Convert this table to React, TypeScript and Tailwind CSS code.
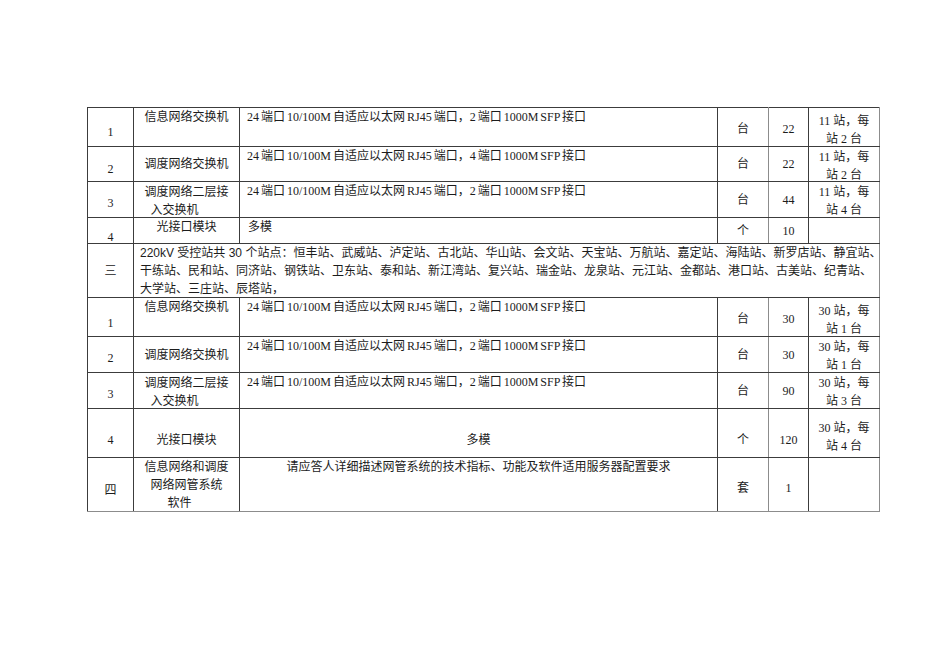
import React from "react";

const font = "font-['Liberation_Serif','Noto_Sans_CJK_SC',serif]";
const line = "border border-[#3c3c3c]";
const soft = "border-r-[#8c8c8c]";
const spec = "24 端口 10/100M 自适应以太网 RJ45 端口，2 端口 1000M SFP 接口";

// 两行备注，固定高度以免撑高行
function Note({ a, b }: { a: string; b: string }) {
  return (
    <div className="h-[33px]">
      {a}
      <br />
      {b}
    </div>
  );
}

export default function App() {
  return (
    <div className={`min-h-[672px] w-[950px] bg-white pl-[87px] pt-[107px] text-[12px] leading-[18px] text-[#1c1c1c] ${font}`}>
      <table className="w-[793px] table-fixed border-collapse">
        <colgroup>
          <col className="w-[46px]" />
          <col className="w-[106px]" />
          <col className="w-[478px]" />
          <col className="w-[51px]" />
          <col className="w-[40px]" />
          <col className="w-[71px]" />
        </colgroup>
        <tbody>
          {/* 第一组 */}
          <tr className="h-[39px]">
            <td className={`${line} p-0 pb-[7px] text-center align-bottom leading-[14px]`}>1</td>
            <td className={`${line} p-0 text-center align-top`}>信息网络交换机</td>
            <td className={`${line} p-0 pl-[7px] align-top whitespace-nowrap [word-spacing:-1px]`}>{spec}</td>
            <td className={`${line} ${soft} p-0 pt-[3px] text-center align-middle`}>台</td>
            <td className={`${line} p-0 pt-[3px] text-center align-middle`}>22</td>
            <td className={`${line} ${soft} p-0 pt-[3px] text-center align-middle`}><Note a="11 站，每" b="站 2 台" /></td>
          </tr>
          <tr className="h-[35px]">
            <td className={`${line} p-0 pb-[5px] text-center align-bottom leading-[14px]`}>2</td>
            <td className={`${line} p-0 text-center align-middle`}>调度网络交换机</td>
            <td className={`${line} p-0 pl-[7px] align-top whitespace-nowrap [word-spacing:-1px]`}>24 端口 10/100M 自适应以太网 RJ45 端口，4 端口 1000M SFP 接口</td>
            <td className={`${line} ${soft} p-0 text-center align-middle`}>台</td>
            <td className={`${line} p-0 text-center align-middle`}>22</td>
            <td className={`${line} ${soft} p-0 text-center align-middle`}><Note a="11 站，每" b="站 2 台" /></td>
          </tr>
          <tr className="h-[36px]">
            <td className={`${line} p-0 pb-[7px] text-center align-bottom leading-[14px]`}>3</td>
            <td className={`${line} p-0 text-center align-middle`}>
              <div className="h-[34px]">调度网络二层接<br /><span className="pr-[24px]">入交换机</span></div>
            </td>
            <td className={`${line} p-0 pl-[7px] align-top whitespace-nowrap [word-spacing:-1px]`}>{spec}</td>
            <td className={`${line} ${soft} p-0 text-center align-middle`}>台</td>
            <td className={`${line} p-0 text-center align-middle`}>44</td>
            <td className={`${line} ${soft} p-0 text-center align-middle`}><Note a="11 站，每" b="站 4 台" /></td>
          </tr>
          <tr className="h-[26px]">
            <td className={`${line} p-0 text-center align-bottom leading-[12px]`}>4</td>
            <td className={`${line} p-0 text-center align-top`}>光接口模块</td>
            <td className={`${line} p-0 pl-[8px] align-top`}>多模</td>
            <td className={`${line} ${soft} p-0 text-center align-middle`}>个</td>
            <td className={`${line} p-0 text-center align-middle`}>10</td>
            <td className={`${line} ${soft} p-0`}></td>
          </tr>

          {/* 三 */}
          <tr className="h-[54px]">
            <td className={`${line} p-0 text-center align-middle text-[#4a4a4a]`}>三</td>
            <td colSpan={5} className={`${line} ${soft} p-0 pl-[6px] align-top whitespace-nowrap font-['Liberation_Sans','Noto_Sans_CJK_SC',sans-serif]`}>
              <div className="h-[52px]">
                <div>220kV 受控站共 30 个站点：恒丰站、武威站、泸定站、古北站、华山站、会文站、天宝站、万航站、嘉定站、海陆站、新罗店站、静宜站、</div>
                <div>干练站、民和站、同济站、钢铁站、卫东站、泰和站、新江湾站、复兴站、瑞金站、龙泉站、元江站、金都站、港口站、古美站、纪青站、</div>
                <div>大学站、三庄站、辰塔站，</div>
              </div>
            </td>
          </tr>

          {/* 第二组 */}
          <tr className="h-[39px]">
            <td className={`${line} p-0 pb-[6px] text-center align-bottom leading-[14px]`}>1</td>
            <td className={`${line} p-0 text-center align-top`}>信息网络交换机</td>
            <td className={`${line} p-0 pl-[7px] align-top whitespace-nowrap [word-spacing:-1px]`}>{spec}</td>
            <td className={`${line} ${soft} p-0 pt-[4px] text-center align-middle`}>台</td>
            <td className={`${line} p-0 pt-[4px] text-center align-middle`}>30</td>
            <td className={`${line} ${soft} p-0 pt-[2px] text-center align-middle`}><Note a="30 站，每" b="站 1 台" /></td>
          </tr>
          <tr className="h-[36px]">
            <td className={`${line} p-0 pb-[7px] text-center align-bottom leading-[14px]`}>2</td>
            <td className={`${line} p-0 text-center align-middle`}>调度网络交换机</td>
            <td className={`${line} p-0 pl-[7px] align-top whitespace-nowrap [word-spacing:-1px]`}>{spec}</td>
            <td className={`${line} ${soft} p-0 text-center align-middle`}>台</td>
            <td className={`${line} p-0 text-center align-middle`}>30</td>
            <td className={`${line} ${soft} p-0 text-center align-middle`}><Note a="30 站，每" b="站 1 台" /></td>
          </tr>
          <tr className="h-[36px]">
            <td className={`${line} p-0 pb-[7px] text-center align-bottom leading-[14px]`}>3</td>
            <td className={`${line} p-0 text-center align-middle`}>
              <div className="h-[34px]">调度网络二层接<br /><span className="pr-[24px]">入交换机</span></div>
            </td>
            <td className={`${line} p-0 pl-[7px] align-top whitespace-nowrap [word-spacing:-1px]`}>{spec}</td>
            <td className={`${line} ${soft} p-0 text-center align-middle`}>台</td>
            <td className={`${line} p-0 text-center align-middle`}>90</td>
            <td className={`${line} ${soft} p-0 text-center align-middle`}><Note a="30 站，每" b="站 3 台" /></td>
          </tr>
          <tr className="h-[49px]">
            <td className={`${line} p-0 pt-[14px] text-center align-middle`}>4</td>
            <td className={`${line} p-0 pt-[14px] text-center align-middle`}>光接口模块</td>
            <td className={`${line} p-0 pt-[14px] text-center align-middle`}>多模</td>
            <td className={`${line} ${soft} p-0 pt-[14px] text-center align-middle`}>个</td>
            <td className={`${line} p-0 pt-[14px] text-center align-middle`}>120</td>
            <td className={`${line} ${soft} p-0 pt-[5px] text-center align-middle`}><Note a="30 站，每" b="站 4 台" /></td>
          </tr>

          {/* 四 */}
          <tr className="h-[54px]">
            <td className={`${line} border-b-[#8c8c8c] p-0 pb-[14px] text-center align-bottom leading-[14px]`}>四</td>
            <td className={`${line} border-b-[#8c8c8c] p-0 text-center align-top`}>
              <div className="h-[52px]">信息网络和调度<br />网络网管系统<br /><span className="pr-[14px]">软件</span></div>
            </td>
            <td className={`${line} border-b-[#8c8c8c] p-0 text-center align-top`}>请应答人详细描述网管系统的技术指标、功能及软件适用服务器配置要求</td>
            <td className={`${line} ${soft} border-b-[#8c8c8c] p-0 pt-[6px] text-center align-middle`}>套</td>
            <td className={`${line} border-b-[#8c8c8c] p-0 pt-[6px] text-center align-middle`}>1</td>
            <td className={`${line} ${soft} border-b-[#8c8c8c] p-0`}></td>
          </tr>
        </tbody>
      </table>
    </div>
  );
}
